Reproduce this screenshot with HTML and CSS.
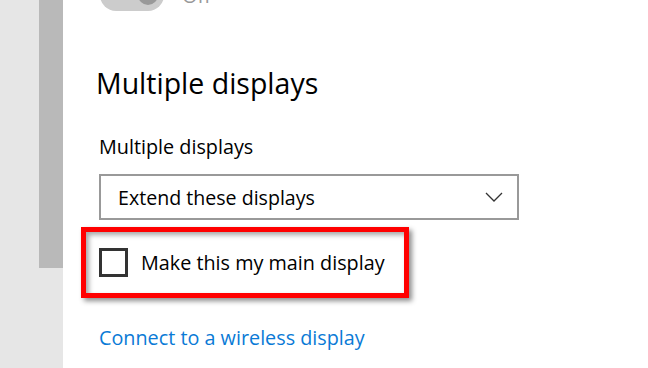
FILE: index.html
```html
<!DOCTYPE html>
<html lang="en">
<head>
    <meta charset="UTF-8">
    <meta name="viewport" content="width=device-width, initial-scale=1.0">
    <title>Display settings</title>
    <link rel="stylesheet" href="styles.css">
</head>
<body>

    <div class="sidebar">
        <div class="scrollThumb"></div>
    </div>

    <div class="content">
        <div class="toggleRow">
            <div class="toggle"><div class="knob"></div></div>
            <span class="toggleText">Off</span>
        </div>

        <h2>Multiple displays</h2>

        <div class="label">Multiple displays</div>
        <div class="select">
            <span>Extend these displays</span>
            <svg width="18" height="10" viewBox="0 0 18 10">
                <path d="M1 1 L9 9 L17 1" fill="none" stroke="#333" stroke-width="1.3"/>
            </svg>
        </div>

        <div class="highlight">
            <div class="checkbox"></div>
            <span>Make this my main display</span>
        </div>

        <a class="link" href="#">Connect to a wireless display</a>
    </div>

</body>
</html>
```

FILE: styles.css
```css
body {
    margin: 0;
    display: flex;
    height: 100vh;
    overflow: hidden;
    background: #fff;
    font-family: "Open Sans", "Noto Sans", sans-serif;
    color: #000;
}
.sidebar {
    width: 63px;
    flex-shrink: 0;
    background: #e6e6e6;
    display: flex;
    justify-content: flex-end;
}
.scrollThumb {
    width: 24px;
    height: 268px;
    background: #b9b9b9;
}
.content {
    flex: 1;
    padding-left: 36px;
    display: flex;
    flex-direction: column;
    align-items: flex-start;
}
.toggleRow {
    display: flex;
    align-items: center;
    height: 32px;
    margin-top: -21px;
    margin-left: 1px;
}
.toggle {
    width: 64px;
    height: 32px;
    border-radius: 16px;
    background: #cccccc;
    position: relative;
}
.knob {
    position: absolute;
    right: 6px;
    top: 6px;
    width: 20px;
    height: 20px;
    border-radius: 50%;
    background: #999;
}
.toggleText {
    margin-left: 18px;
    font-size: 20px;
    color: #999;
}
h2 {
    margin: 53px 0 0 -3px;
    font-size: 28.5px;
    font-weight: normal;
    line-height: 38px;
}
.label {
    margin-top: 33px;
    font-size: 19.8px;
    line-height: 24px;
}
.select {
    margin-top: 15px;
    box-sizing: border-box;
    width: 420px;
    height: 46px;
    border: 2px solid #999;
    display: flex;
    align-items: center;
    justify-content: space-between;
    padding: 0 14px 0 17px;
    font-size: 19.6px;
}
.highlight {
    margin: 7px 0 0 -18px;
    box-sizing: border-box;
    width: 328px;
    height: 71px;
    border: 5px solid #ff0000;
    box-shadow: 3px 3px 5px rgba(0, 0, 0, 0.45), inset 3px 3px 5px rgba(0, 0, 0, 0.35);
    display: flex;
    align-items: center;
    padding-left: 13px;
    font-size: 19.8px;
}
.checkbox {
    box-sizing: border-box;
    width: 29px;
    height: 29px;
    border: 3px solid #333;
    margin-right: 13px;
}
.link {
    margin-top: 28px;
    color: #0a7ad6;
    text-decoration: none;
    font-size: 19.8px;
    line-height: 24px;
}
```
